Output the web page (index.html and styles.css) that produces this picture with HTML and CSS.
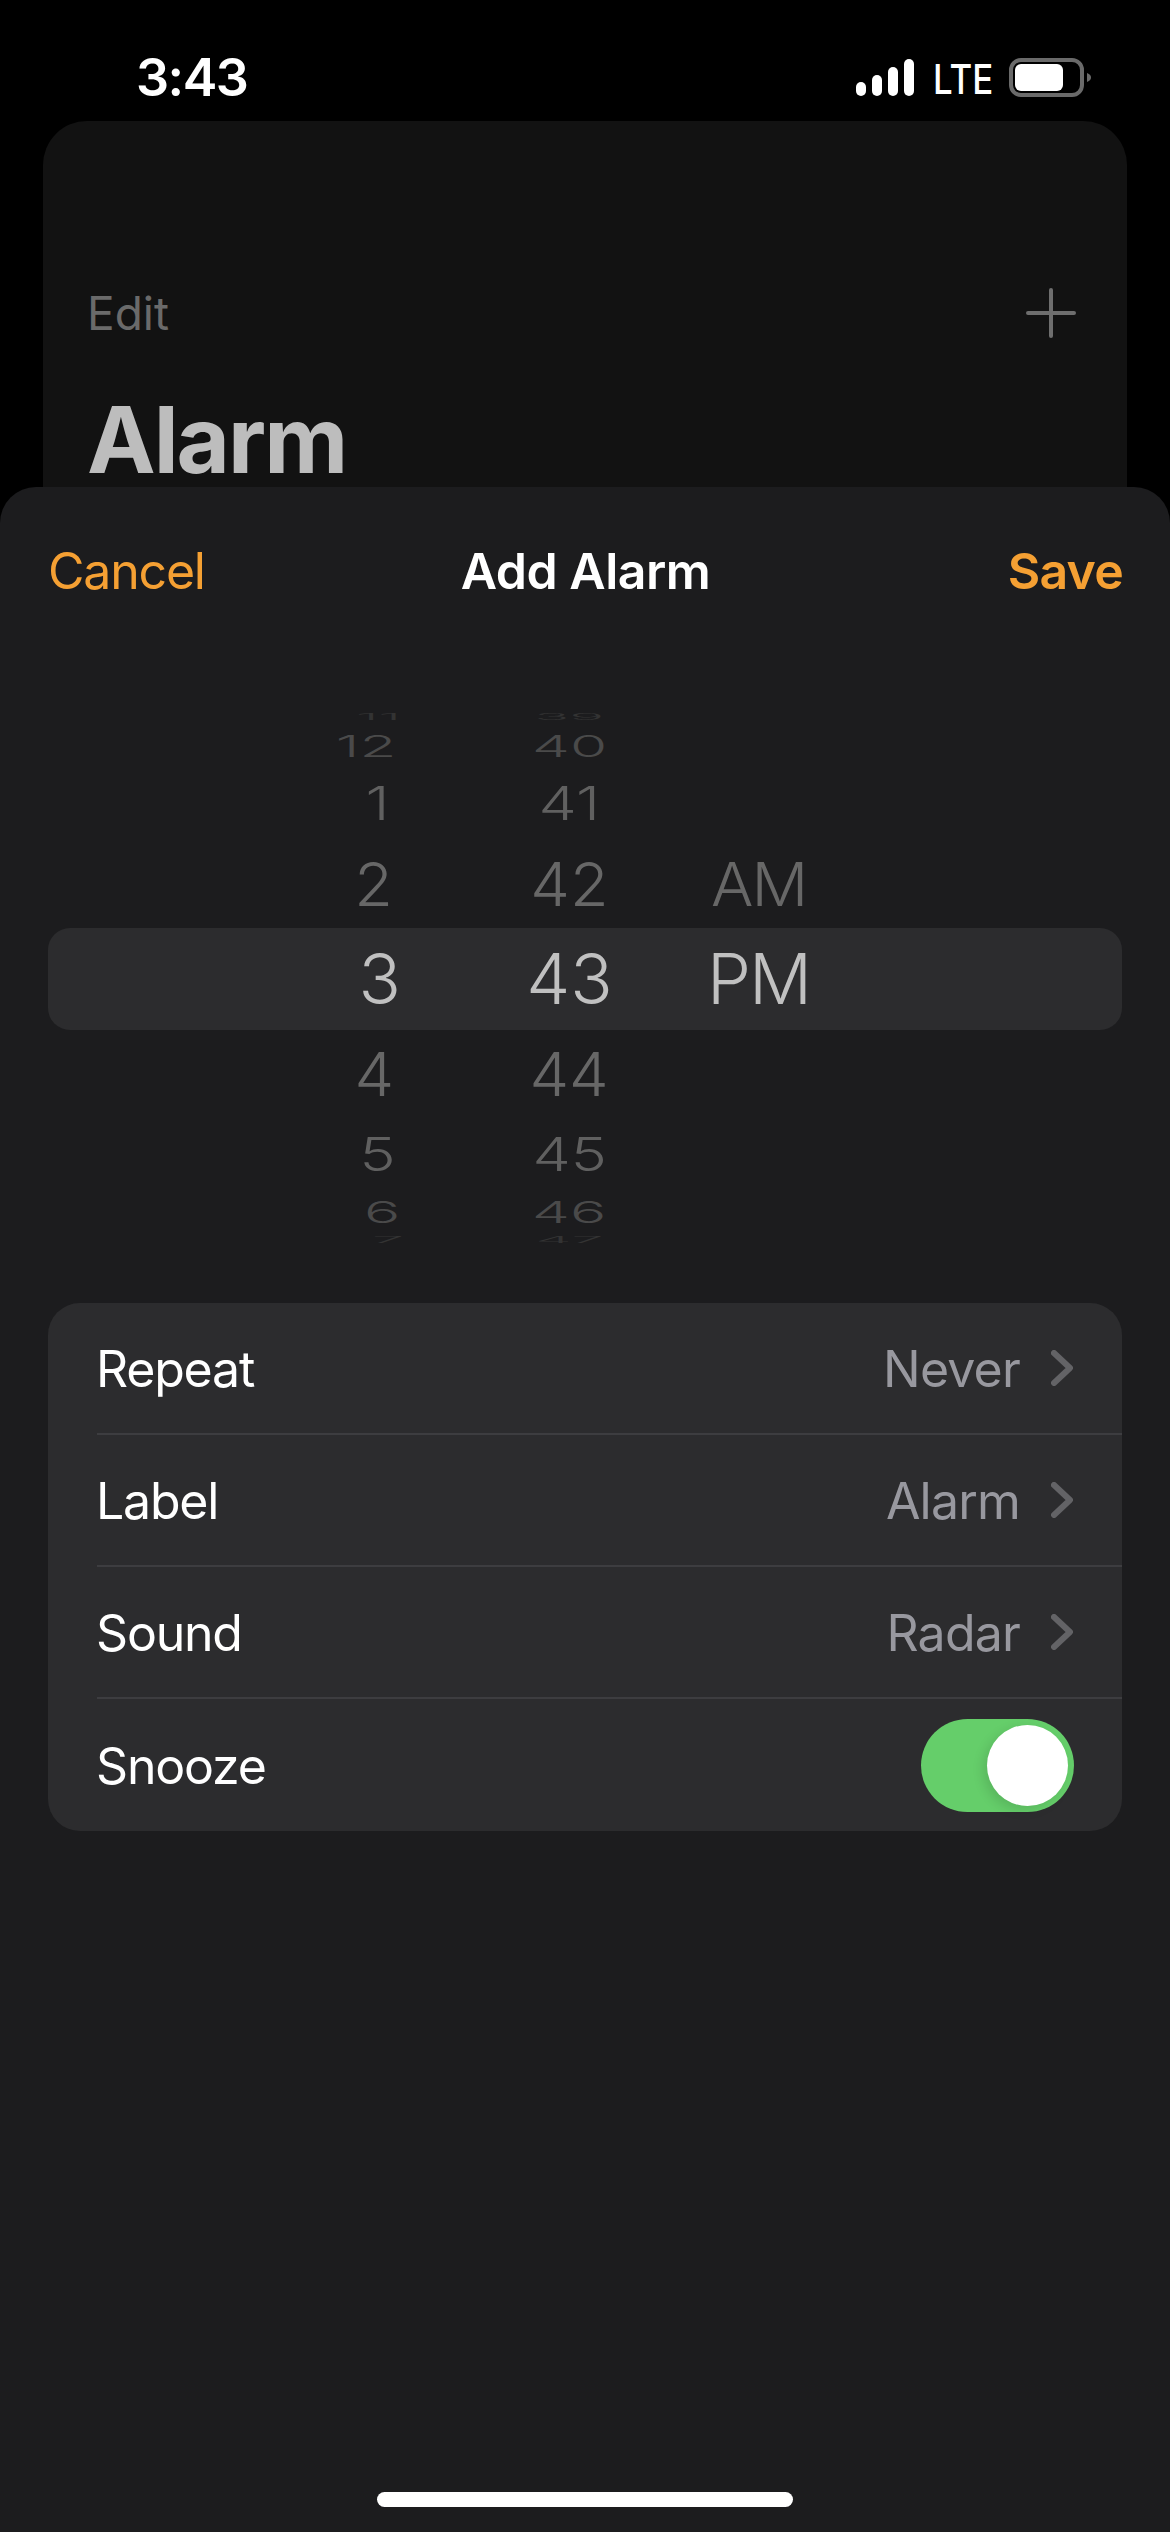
FILE: index.html
```html
<!DOCTYPE html>
<html lang="en">
<head>
    <meta charset="UTF-8">
    <meta name="viewport" content="width=device-width, initial-scale=1.0">
    <title>Add Alarm</title>
    <link rel="stylesheet" href="styles.css">
</head>
<body>

    <header class="status-bar">
        <div class="status-time">3:43</div>
        <div class="status-icons">
            <svg class="signal" width="58" height="37" viewBox="0 0 58 37" aria-hidden="true">
                <rect x="0" y="23" width="10" height="14" rx="5" fill="#fff"/>
                <rect x="16" y="16" width="10" height="21" rx="5" fill="#fff"/>
                <rect x="32" y="8" width="10" height="29" rx="5" fill="#fff"/>
                <rect x="48" y="0" width="10" height="37" rx="5" fill="#fff"/>
            </svg>
            <span class="status-lte">LTE</span>
            <svg class="battery" width="82" height="39" viewBox="0 0 82 39" aria-hidden="true">
                <rect x="2" y="2" width="71" height="35" rx="10" fill="none" stroke="#6a6a6a" stroke-width="4"/>
                <rect x="6" y="6" width="48" height="27" rx="6" fill="#fff"/>
                <path d="M78 15 C81 16 82 18 82 19.5 C82 21 81 23 78 24 Z" fill="#6a6a6a"/>
            </svg>
        </div>
    </header>

    <div class="back-card">
        <div class="back-nav">
            <span class="back-edit">Edit</span>
            <svg width="50" height="50" viewBox="0 0 50 50" aria-hidden="true">
                <path d="M25 2 V48 M2 25 H48" stroke="#6e6e6e" stroke-width="4" stroke-linecap="round"/>
            </svg>
        </div>
        <h1 class="back-title">Alarm</h1>
    </div>

    <main class="sheet">
        <div class="sheet-nav">
            <span class="nav-cancel">Cancel</span>
            <span class="nav-title">Add Alarm</span>
            <span class="nav-save">Save</span>
        </div>

        <div class="picker">
            <div class="wheel-row far-top"><div class="hour"><span>11</span></div><div class="minute"><span>39</span></div><div class="ampm"></div></div>
            <div class="wheel-row up-3"><div class="hour"><span>12</span></div><div class="minute"><span>40</span></div><div class="ampm"></div></div>
            <div class="wheel-row up-2"><div class="hour"><span>1</span></div><div class="minute"><span>41</span></div><div class="ampm"></div></div>
            <div class="wheel-row up-1"><div class="hour"><span>2</span></div><div class="minute"><span>42</span></div><div class="ampm"><span>AM</span></div></div>
            <div class="wheel-row selected"><div class="hour"><span>3</span></div><div class="minute"><span>43</span></div><div class="ampm"><span>PM</span></div></div>
            <div class="wheel-row down-1"><div class="hour"><span>4</span></div><div class="minute"><span>44</span></div><div class="ampm"></div></div>
            <div class="wheel-row down-2"><div class="hour"><span>5</span></div><div class="minute"><span>45</span></div><div class="ampm"></div></div>
            <div class="wheel-row down-3"><div class="hour"><span>6</span></div><div class="minute"><span>46</span></div><div class="ampm"></div></div>
            <div class="wheel-row far-bottom"><div class="hour"><span>7</span></div><div class="minute"><span>47</span></div><div class="ampm"></div></div>
        </div>

        <div class="options">
            <div class="option">
                <span class="option-label">Repeat</span>
                <span class="option-value">Never</span>
                <svg class="chevron" width="22" height="36" viewBox="0 0 22 36" aria-hidden="true"><path d="M3 3 L19 18 L3 33" fill="none" stroke="#636366" stroke-width="6" stroke-linecap="round" stroke-linejoin="round"/></svg>
            </div>
            <div class="option">
                <span class="option-label">Label</span>
                <span class="option-value">Alarm</span>
                <svg class="chevron" width="22" height="36" viewBox="0 0 22 36" aria-hidden="true"><path d="M3 3 L19 18 L3 33" fill="none" stroke="#636366" stroke-width="6" stroke-linecap="round" stroke-linejoin="round"/></svg>
            </div>
            <div class="option">
                <span class="option-label">Sound</span>
                <span class="option-value">Radar</span>
                <svg class="chevron" width="22" height="36" viewBox="0 0 22 36" aria-hidden="true"><path d="M3 3 L19 18 L3 33" fill="none" stroke="#636366" stroke-width="6" stroke-linecap="round" stroke-linejoin="round"/></svg>
            </div>
            <div class="option">
                <span class="option-label">Snooze</span>
                <div class="toggle"><div class="toggle-knob"></div></div>
            </div>
        </div>

        <div class="home-indicator"></div>
    </main>

</body>
</html>
```

FILE: styles.css
```css
* {
    box-sizing: border-box;
}
body {
    font-family: Inter, "Noto Sans", sans-serif;
    background-color: #000;
    color: #fff;
    margin: 0;
    padding: 0;
    width: 1170px;
    height: 2532px;
    overflow: hidden;
    display: flex;
    flex-direction: column;
}

/* Status bar */
.status-bar {
    height: 121px;
    flex-shrink: 0;
    display: flex;
    justify-content: space-between;
    padding: 58px 79px 0 136px;
}
.status-time {
    font-size: 52px;
    font-weight: 600;
    line-height: 40px;
    letter-spacing: -1.5px;
}
.status-icons {
    display: flex;
    align-items: flex-start;
}
.signal {
    margin-top: 1px;
}
.status-lte {
    width: 57px;
    margin: 2px 19px 0 19px;
    font-size: 41px;
    font-weight: 500;
    line-height: 38px;
    transform: scaleX(.85);
    transform-origin: left center;
}

/* Card behind the sheet */
.back-card {
    height: 396px;
    flex-shrink: 0;
    margin: 0 43px;
    padding: 167px 51px 0 44px;
    background-color: #121212;
    border-radius: 44px 44px 0 0;
}
.back-nav {
    display: flex;
    justify-content: space-between;
    align-items: center;
    height: 50px;
}
.back-edit {
    font-size: 46px;
    color: #6a6a6a;
}
.back-title {
    margin: 57px 0 0 0;
    font-size: 92px;
    line-height: 90px;
    font-weight: 700;
    color: #bdbdbd;
    letter-spacing: -2px;
}

/* Sheet */
.sheet {
    position: relative;
    flex: 1;
    margin-top: -30px;
    background-color: #1c1c1e;
    border-radius: 36px 36px 0 0;
    display: flex;
    flex-direction: column;
}
.sheet-nav {
    height: 168px;
    flex-shrink: 0;
    display: grid;
    grid-template-columns: 1fr auto 1fr;
    align-items: center;
    padding: 0 47px 0 48px;
    font-size: 50px;
    letter-spacing: -1.2px;
}
.nav-cancel {
    color: #f5a033;
}
.nav-title {
    font-weight: 600;
    letter-spacing: -0.5px;
}
.nav-save {
    color: #f5a033;
    font-weight: 600;
    letter-spacing: -0.8px;
    text-align: right;
}

/* Time picker */
.picker {
    margin: 53px 48px 0 48px;
}
.wheel-row {
    display: grid;
    grid-template-columns: 379px 285px 1fr;
    grid-template-rows: 100%;
    align-items: center;
    font-size: 70px;
    line-height: 1;
    font-weight: 300;
    color: #676767;
}
.wheel-row span {
    display: inline-block;
}
.hour {
    text-align: right;
    padding-right: 26px;
}
.hour span {
    transform-origin: right center;
}
.minute {
    text-align: center;
}
.ampm {
    letter-spacing: -2px;
    margin-left: -1px;
}
.ampm span {
    transform-origin: left center;
}
.selected {
    height: 102px;
    background-color: #2c2c2e;
    border-radius: 22px;
    color: #c0c0c0;
}
.selected .ampm {
    margin-left: -5px;
}
.far-top { height: 18px; color: #333; }
.up-3 { height: 40px; color: #4a4a4a; }
.up-2 { height: 74px; color: #606060; }
.up-1 { height: 88px; }
.down-1 { height: 88px; }
.down-2 { height: 72px; color: #606060; }
.down-3 { height: 44px; color: #4a4a4a; }
.far-bottom { height: 12px; color: #333; }
.far-top span, .far-bottom span { transform: scale(.82, .12); }
.up-3 span, .down-3 span { transform: scale(.86, .43); }
.up-2 span, .down-2 span { transform: scale(.87, .66); }
.up-1 span, .down-1 span { transform: scale(.9, .86); }

.up-3 .hour { padding-right: 30px; }
.up-2 .hour { padding-right: 37px; }
.up-1 .hour { padding-right: 34px; }
.down-1 .hour { padding-right: 33px; }
.down-2 .hour { padding-right: 31px; }
.down-3 .hour { padding-right: 27px; }
.far-bottom .hour { padding-right: 23px; }

/* Option list */
.options {
    margin: 57px 48px 0 48px;
    background-color: #2c2c2e;
    border-radius: 32px;
}
.option {
    height: 132px;
    margin-left: 49px;
    padding-right: 49px;
    display: flex;
    align-items: center;
    font-size: 50px;
    letter-spacing: -1.2px;
    border-bottom: 2px solid #3d3d40;
}
.option:last-child {
    border-bottom: none;
}
.option-label {
    flex: 1;
    margin: 2px 0 0 -1px;
}
.option-value {
    color: #98989f;
    margin: 2px 31px 0 0;
    letter-spacing: -0.8px;
}
.toggle {
    width: 153px;
    height: 93px;
    margin-right: -1px;
    padding: 6px;
    border-radius: 47px;
    background-color: #65ce6a;
    display: flex;
    justify-content: flex-end;
}
.toggle-knob {
    width: 81px;
    height: 81px;
    border-radius: 50%;
    background-color: #fff;
    box-shadow: -4px 4px 12px rgba(0, 0, 0, 0.12);
}

.home-indicator {
    width: 416px;
    height: 15px;
    flex-shrink: 0;
    margin: auto auto 25px auto;
    background-color: #fff;
    border-radius: 8px;
}
```
